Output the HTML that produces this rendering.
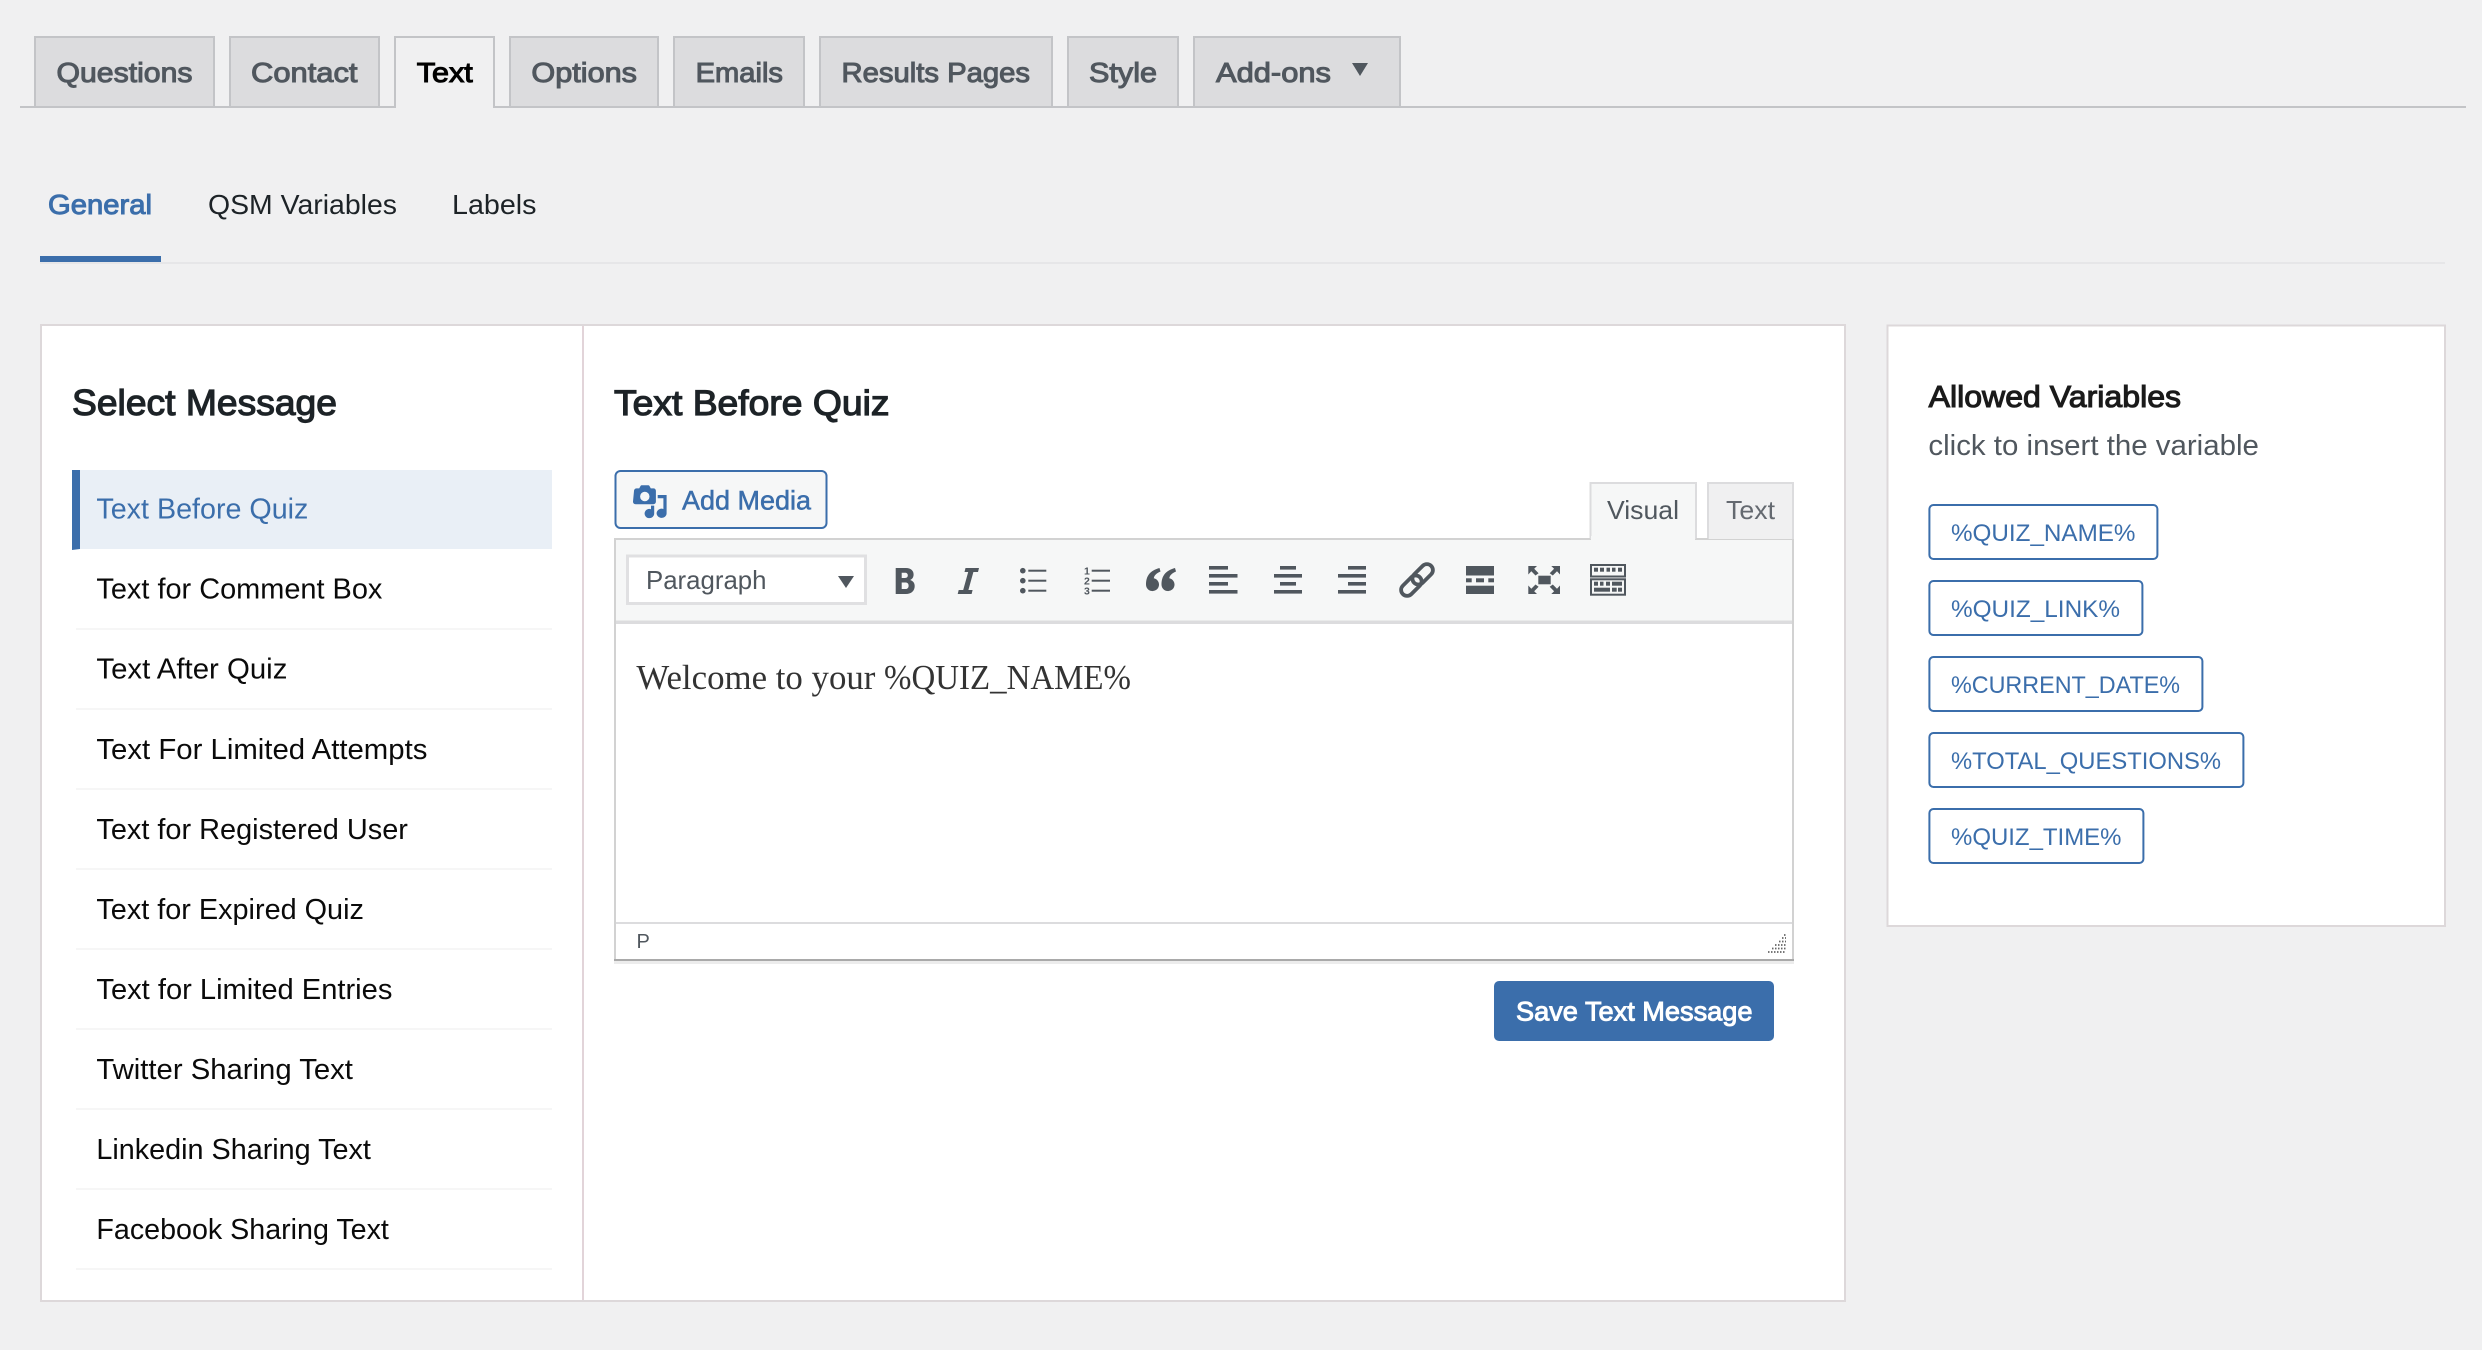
<!DOCTYPE html>
<html lang="en">
<head>
<meta charset="utf-8">
<title>Quiz Text Settings</title>
<style>
html,body{margin:0;padding:0;background:#f0f0f1;width:2482px;height:1350px;overflow:hidden}
svg{display:block}
text{font-family:"Liberation Sans",sans-serif;white-space:pre}
.b{font-weight:400;stroke-width:1.2}
.tab{font-size:28px;font-weight:400;fill:#50575e;stroke:#50575e;stroke-width:1.05}
.item{font-size:28.5px;fill:#0a0a0a}
.var{font-size:24.5px;fill:#3b6eab}
.vb{fill:#fff;stroke:#3b6eab;stroke-width:2}
.sep{fill:#f6f6f6}
.ic{fill:#50575e}
</style>
</head>
<body>
<svg xmlns="http://www.w3.org/2000/svg" width="2482" height="1350" viewBox="0 0 2482 1350">
<rect width="2482" height="1350" fill="#f0f0f1"/>

<!-- top tabs -->
<rect x="20" y="106" width="2446" height="2" fill="#c3c4c7"/>
<g fill="#dcdcde" stroke="#c3c4c7" stroke-width="2">
<rect x="35" y="37" width="179" height="70"/>
<rect x="230" y="37" width="149" height="70"/>
<rect x="510" y="37" width="148" height="70"/>
<rect x="674" y="37" width="130" height="70"/>
<rect x="820" y="37" width="232" height="70"/>
<rect x="1068" y="37" width="110" height="70"/>
<rect x="1194" y="37" width="206" height="70"/>
</g>
<path d="M395 108V37H494V108" fill="#f0f0f1" stroke="#c3c4c7" stroke-width="2"/>
<text class="tab" x="56.5" y="82" textLength="136" lengthAdjust="spacingAndGlyphs">Questions</text>
<text class="tab" x="251" y="82" textLength="106.5" lengthAdjust="spacingAndGlyphs">Contact</text>
<text class="tab" x="416.8" y="82" textLength="56" lengthAdjust="spacingAndGlyphs" style="fill:#000;stroke:#000">Text</text>
<text class="tab" x="531.4" y="82" textLength="105.6" lengthAdjust="spacingAndGlyphs">Options</text>
<text class="tab" x="695.6" y="82" textLength="87.4" lengthAdjust="spacingAndGlyphs">Emails</text>
<text class="tab" x="841.5" y="82" textLength="188.5" lengthAdjust="spacingAndGlyphs">Results Pages</text>
<text class="tab" x="1089" y="82" textLength="68" lengthAdjust="spacingAndGlyphs">Style</text>
<text class="tab" x="1216" y="82" textLength="115" lengthAdjust="spacingAndGlyphs">Add-ons</text>
<path d="M1352 63H1368L1360 76Z" fill="#50575e"/>

<!-- sub tabs -->
<rect x="40" y="262" width="2405" height="2" fill="#e6e6e8"/>
<rect x="40" y="256" width="121" height="6" fill="#3b6eab"/>
<text class="b" x="48" y="214" font-size="28" fill="#3b6eab" stroke="#3b6eab" style="stroke-width:1" textLength="104" lengthAdjust="spacingAndGlyphs">General</text>
<text x="208" y="214" font-size="28" fill="#1d2327" textLength="189" lengthAdjust="spacingAndGlyphs">QSM Variables</text>
<text x="452" y="214" font-size="28" fill="#1d2327" textLength="84.5" lengthAdjust="spacingAndGlyphs">Labels</text>

<!-- main panel -->
<rect x="41" y="325" width="1804" height="976" fill="#fff" stroke="#ddd8da" stroke-width="2"/>
<rect x="582" y="326" width="2" height="974" fill="#e2d4d9"/>

<text class="b" x="72" y="415" font-size="36" fill="#1d2327" stroke="#1d2327" textLength="265" lengthAdjust="spacingAndGlyphs">Select Message</text>

<rect x="72" y="470" width="480" height="79" fill="#e9eff6"/>
<path d="M72 470H80V549L72 550Z" fill="#3b6eab"/>
<text class="item" x="96.4" y="518.5" style="fill:#3b6eab" textLength="212" lengthAdjust="spacingAndGlyphs">Text Before Quiz</text>
<text class="item" x="96.4" y="598.5" textLength="286" lengthAdjust="spacingAndGlyphs">Text for Comment Box</text>
<rect class="sep" x="76" y="628" width="476" height="2"/>
<text class="item" x="96.4" y="678.5" textLength="191" lengthAdjust="spacingAndGlyphs">Text After Quiz</text>
<rect class="sep" x="76" y="708" width="476" height="2"/>
<text class="item" x="96.4" y="759" textLength="331" lengthAdjust="spacingAndGlyphs">Text For Limited Attempts</text>
<rect class="sep" x="76" y="788" width="476" height="2"/>
<text class="item" x="96.4" y="839" textLength="311.5" lengthAdjust="spacingAndGlyphs">Text for Registered User</text>
<rect class="sep" x="76" y="868" width="476" height="2"/>
<text class="item" x="96.4" y="919" textLength="267.5" lengthAdjust="spacingAndGlyphs">Text for Expired Quiz</text>
<rect class="sep" x="76" y="948" width="476" height="2"/>
<text class="item" x="96.4" y="999" textLength="296" lengthAdjust="spacingAndGlyphs">Text for Limited Entries</text>
<rect class="sep" x="76" y="1028" width="476" height="2"/>
<text class="item" x="96.4" y="1079" textLength="256.5" lengthAdjust="spacingAndGlyphs">Twitter Sharing Text</text>
<rect class="sep" x="76" y="1108" width="476" height="2"/>
<text class="item" x="96.4" y="1159" textLength="274.5" lengthAdjust="spacingAndGlyphs">Linkedin Sharing Text</text>
<rect class="sep" x="76" y="1188" width="476" height="2"/>
<text class="item" x="96.4" y="1239" textLength="292.5" lengthAdjust="spacingAndGlyphs">Facebook Sharing Text</text>
<rect class="sep" x="76" y="1268" width="476" height="2"/>

<text class="b" x="614" y="415" font-size="35" fill="#1d2327" stroke="#1d2327" textLength="275.5" lengthAdjust="spacingAndGlyphs">Text Before Quiz</text>

<!-- add media -->
<rect x="615.5" y="471" width="211" height="57" rx="5" fill="#f6f7f7" stroke="#3b6eab" stroke-width="2"/>
<path fill-rule="evenodd" fill="#3b6eab" d="M634 491c0-1.6 1-2.6 2.6-2.6h2.6l1.2-2.2c.3-.6.8-.9 1.5-.9h6.2c.7 0 1.2.3 1.5.9l1.2 2.2h2.5c1.6 0 2.6 1 2.6 2.6v10.5c0 1.6-1 2.7-2.6 2.7h-17.7c-1.6 0-2.6-1.1-2.6-2.7zM644.8 491.8a4.7 4.7 0 1 0 0 9.4a4.7 4.7 0 1 0 0-9.4z"/>
<path fill="#3b6eab" d="M657.7 495H666.6V513.5A5 4.6 0 1 1 663.4 509V498.2H657.7ZM654.2 505.6V513.5A4.8 4.6 0 1 1 651 509.2V505.6Z"/>
<text x="682" y="509.5" font-size="27" fill="#3b6eab" stroke="#3b6eab" stroke-width=".5" textLength="129" lengthAdjust="spacingAndGlyphs">Add Media</text>

<!-- visual/text tabs -->
<path d="M1590.5 540V483H1696V540" fill="#f6f7f7" stroke="#dcdcde" stroke-width="2"/>
<path d="M1708 539V483H1793V539" fill="#f0f0f1" stroke="#dcdcde" stroke-width="2"/>
<text x="1607" y="519" font-size="26" fill="#50575e" textLength="72" lengthAdjust="spacingAndGlyphs">Visual</text>
<text x="1726" y="519" font-size="26" fill="#646970" textLength="49" lengthAdjust="spacingAndGlyphs">Text</text>

<!-- editor -->
<rect x="615" y="540" width="1178" height="420" fill="#fff" stroke="#d2d2d2" stroke-width="2"/>
<rect x="616" y="540" width="1176" height="81" fill="#f6f7f7"/>
<path d="M614 539H1590M1696 539H1708" stroke="#d2d2d2" stroke-width="2" fill="none"/>
<rect x="1591" y="536" width="104" height="6" fill="#f6f7f7"/>
<rect x="616" y="620.5" width="1176" height="3.5" fill="#dcdcde"/>
<rect x="627.5" y="556" width="238" height="47.5" fill="#fff" stroke="#e0e0e2" stroke-width="3"/>
<text x="646" y="589" font-size="26" fill="#50575e" textLength="120.5" lengthAdjust="spacingAndGlyphs">Paragraph</text>
<path d="M838 576H854L846 588Z" fill="#50575e"/>

<!-- toolbar icons -->
<path class="ic" fill-rule="evenodd" d="M895.7 568H906c5 0 7.6 2.8 7.6 6.5 0 2.7-1.4 4.7-3.5 5.5 2.9.8 4.6 3 4.6 6 0 4.7-3.2 8-8.8 8H895.7ZM901.7 572.8V578H905c1.8 0 2.8-1 2.8-2.6s-1-2.6-2.8-2.6ZM901.7 582.5V589h3.8c2 0 3.1-1.3 3.1-3.3s-1.1-3.2-3.1-3.2Z"/>
<path class="ic" d="M965.5 568H979L978 572H973.4L968.4 590H972.6L971.6 594H957.7L958.7 590H963.2L968.2 572H964.5Z"/>
<g class="ic">
<circle cx="1022.8" cy="570.7" r="2.8"/><circle cx="1022.8" cy="580.7" r="2.8"/><circle cx="1022.8" cy="590.7" r="2.8"/>
<rect x="1028.3" y="569.7" width="18" height="2"/><rect x="1028.3" y="579.7" width="18" height="2"/><rect x="1028.3" y="589.7" width="18" height="2"/>
<rect x="1091.7" y="569.7" width="18.3" height="2"/><rect x="1091.7" y="579.7" width="18.3" height="2"/><rect x="1091.7" y="589.7" width="18.3" height="2"/>
</g>
<g font-size="10.5" fill="#50575e" font-weight="700">
<text x="1084" y="574.5">1</text><text x="1084" y="584.5">2</text><text x="1084" y="594.5">3</text>
</g>
<path class="ic" d="M1146 584.5C1146 576 1150 570.5 1159.5 568L1160.5 571.5C1156 573.5 1154.3 575.5 1153.8 578.2A6.5 6.5 0 1 1 1146 584.5ZM1161.5 584.5C1161.5 576 1165.5 570.5 1175 568L1176 571.5C1171.5 573.5 1169.8 575.5 1169.3 578.2A6.5 6.5 0 1 1 1161.5 584.5Z"/>
<g class="ic">
<rect x="1209" y="566" width="19" height="3.6"/><rect x="1209" y="574" width="28.5" height="3.6"/><rect x="1209" y="582" width="19" height="3.6"/><rect x="1209" y="590" width="28.5" height="3.6"/>
<rect x="1280" y="566" width="16" height="3.6"/><rect x="1274" y="574" width="28" height="3.6"/><rect x="1280" y="582" width="16" height="3.6"/><rect x="1274" y="590" width="28" height="3.6"/>
<rect x="1348" y="566" width="18" height="3.6"/><rect x="1338" y="574" width="28" height="3.6"/><rect x="1348" y="582" width="18" height="3.6"/><rect x="1338" y="590" width="28" height="3.6"/>
</g>
<g fill="none" stroke="#50575e" stroke-width="3.8" transform="rotate(-45 1417 580)">
<rect x="1397" y="574" width="24" height="12" rx="6"/>
<rect x="1413" y="574" width="24" height="12" rx="6"/>
</g>
<g class="ic">
<rect x="1466" y="566" width="28" height="9.5"/>
<rect x="1466" y="578.3" width="5.7" height="4"/><rect x="1476" y="578.3" width="8" height="4"/><rect x="1488.3" y="578.3" width="5.7" height="4"/>
<rect x="1466" y="585.7" width="28" height="8.3"/>
<rect x="1538.3" y="575.7" width="12.4" height="8.6"/>
<path d="M1528.3 566H1537L1534.2 568.8 1538.6 573.2 1535.5 575.5 1531.3 571.2 1528.3 574.5Z"/>
<path d="M1560 566H1551.3L1554.1 568.8 1549.7 573.2 1552.8 575.5 1557 571.2 1560 574.5Z"/>
<path d="M1528.3 594H1537L1534.2 591.2 1538.6 586.8 1535.5 584.5 1531.3 588.8 1528.3 585.5Z"/>
<path d="M1560 594H1551.3L1554.1 591.2 1549.7 586.8 1552.8 584.5 1557 588.8 1560 585.5Z"/>
</g>
<g fill="none" stroke="#50575e" stroke-width="2">
<rect x="1591" y="565" width="34" height="11.5"/>
<rect x="1591" y="579.3" width="34" height="15.4"/>
</g>
<g class="ic">
<rect x="1594" y="567.7" width="4" height="4"/><rect x="1600" y="567.7" width="4" height="4"/><rect x="1606.5" y="567.7" width="3.5" height="4"/><rect x="1612" y="567.7" width="3.5" height="4"/><rect x="1618" y="567.7" width="4" height="4"/>
<rect x="1594" y="581.7" width="4" height="4"/><rect x="1600" y="581.7" width="3.5" height="4"/><rect x="1606" y="581.7" width="4" height="4"/><rect x="1612" y="581.7" width="10" height="4"/>
<rect x="1594" y="587.7" width="16" height="4"/><rect x="1612" y="587.7" width="4.7" height="4"/><rect x="1618" y="587.7" width="4" height="4"/>
</g>

<!-- editor content -->
<text x="636.4" y="689" font-size="34.5" fill="#333" style="font-family:'Liberation Serif',serif" textLength="239" lengthAdjust="spacingAndGlyphs">Welcome to your</text>
<text x="884" y="689" font-size="34.5" fill="#333" style="font-family:'Liberation Serif',serif" textLength="247" lengthAdjust="spacingAndGlyphs">%QUIZ_NAME%</text>

<!-- status bar -->
<rect x="616" y="922" width="1176" height="2" fill="#dcdcde"/>
<rect x="614" y="959" width="1180" height="2" fill="#a9a9a9"/>
<rect x="614" y="961" width="1180" height="3" fill="#ececec"/>
<text x="636.5" y="948" font-size="20" fill="#50575e">P</text>
<path d="M1768 952H1786M1772 948.5H1786M1775 945H1786M1779 941.5H1786M1782 938H1786M1784 935H1786" stroke="#666" stroke-width="1.8" stroke-dasharray="1.5 1.5" fill="none"/>

<!-- save -->
<rect x="1494" y="981" width="280" height="60" rx="5" fill="#3b6eab"/>
<text class="b" x="1516" y="1020.7" font-size="27" fill="#fff" stroke="#fff" style="stroke-width:.95" textLength="236.5" lengthAdjust="spacingAndGlyphs">Save Text Message</text>

<!-- right panel -->
<rect x="1887.5" y="325.5" width="557.5" height="600.5" fill="#fff" stroke="#ddd8da" stroke-width="2"/>
<text class="b" x="1928.6" y="407" font-size="31" fill="#1a1a1a" stroke="#1a1a1a" style="stroke-width:1.1" textLength="252.5" lengthAdjust="spacingAndGlyphs">Allowed Variables</text>
<text x="1928.4" y="455" font-size="28.5" fill="#50575e" textLength="330.5" lengthAdjust="spacingAndGlyphs">click to insert the variable</text>

<rect class="vb" x="1929.4" y="505" width="228" height="54" rx="4"/>
<text class="var" x="1951" y="541" textLength="184.5" lengthAdjust="spacingAndGlyphs">%QUIZ_NAME%</text>
<rect class="vb" x="1929.4" y="581" width="213" height="54" rx="4"/>
<text class="var" x="1951" y="617" textLength="169" lengthAdjust="spacingAndGlyphs">%QUIZ_LINK%</text>
<rect class="vb" x="1929.4" y="657" width="273" height="54" rx="4"/>
<text class="var" x="1951" y="693" textLength="229" lengthAdjust="spacingAndGlyphs">%CURRENT_DATE%</text>
<rect class="vb" x="1929.4" y="733" width="314" height="54" rx="4"/>
<text class="var" x="1951" y="769" textLength="270" lengthAdjust="spacingAndGlyphs">%TOTAL_QUESTIONS%</text>
<rect class="vb" x="1929.4" y="809" width="214" height="54" rx="4"/>
<text class="var" x="1951" y="845" textLength="170.5" lengthAdjust="spacingAndGlyphs">%QUIZ_TIME%</text>
</svg>
</body>
</html>
